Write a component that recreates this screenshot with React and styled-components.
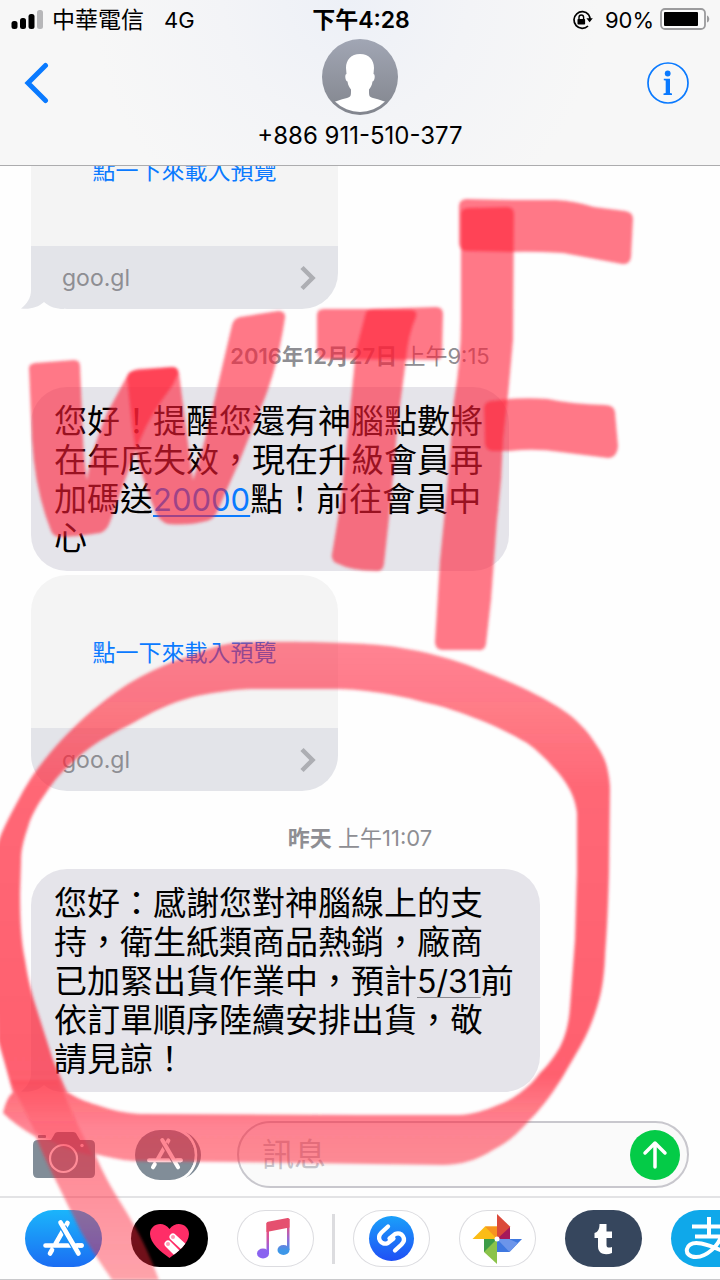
import React from "react";
import styled, { createGlobalStyle, css } from "styled-components";

const GlobalStyle = createGlobalStyle`
  *, *::before, *::after { box-sizing: border-box; }
  body {
    margin: 0;
    background: #fefefe;
    color: #000;
    font-family: Inter, "Noto Sans CJK TC", sans-serif;
    -webkit-font-smoothing: antialiased;
  }
  button { border: 0; padding: 0; background: none; font: inherit; color: inherit; cursor: pointer; }
  svg { display: block; }
`;

const BLUE = "#0a7aff";

const Screen = styled.div`
  position: relative;
  display: flex;
  flex-direction: column;
  height: 100vh;
  overflow: hidden;
`;

/* ---------- header ---------- */

const Header = styled.header`
  flex: none;
  background: radial-gradient(circle at 48% 0, #edf0f7 0, #f3f4f7 30%, #f7f7f7 62%);
  border-bottom: 1px solid #acacae;
`;

const StatusBar = styled.div`
  display: grid;
  grid-template-columns: 1fr auto 1fr;
  align-items: center;
  height: 39px;
  padding: 0 9px 0 11px;
  font-size: 22px;
  line-height: 38px;
`;

const StatusGroup = styled.div`
  display: flex;
  align-items: center;
  gap: ${(p) => p.$gap};
  justify-content: ${(p) => (p.$end ? "flex-end" : "flex-start")};
`;

const Carrier = styled.span`
  font-size: 23px;
  margin-right: 12px;
`;

const Clock = styled.time`
  font-size: 23px;
  font-weight: 600;
`;

const NavBar = styled.nav`
  display: grid;
  grid-template-columns: 1fr auto 1fr;
  padding: 0 24px;
  height: 126px;
`;

const NavButton = styled.button`
  display: flex;
  align-items: center;
  height: 88px;
  color: ${BLUE};
  justify-self: ${(p) => (p.$end ? "end" : "start")};
  margin-right: ${(p) => (p.$end ? "7px" : "0")};
`;

const Contact = styled.div`
  display: flex;
  flex-direction: column;
  align-items: center;
  gap: 6px;
  font-size: 24px;
  line-height: 30px;
`;

/* ---------- conversation ---------- */

const Thread = styled.main`
  flex: 1;
  min-height: 0;
  display: flex;
  flex-direction: column;
  justify-content: flex-end;
  align-items: flex-start;
  padding: 0 31px 20px;
  overflow: hidden;
`;

const Stamp = styled.time`
  flex: none;
  align-self: center;
  padding: 32px 0 16px;
  font-size: 22px;
  line-height: 30px;
  color: #8e8e93;
  b { font-weight: 600; }
`;

const bubbleShape = css`
  flex: none;
  position: relative;
  isolation: isolate;
  border-radius: 36px;
`;

const Tail = styled.svg`
  position: absolute;
  z-index: -1;
  left: -10px;
  bottom: 0;
`;

const Bubble = styled.p`
  ${bubbleShape}
  margin: 0;
  padding: 15px 26px 13px 23px;
  background: #e5e4ea;
  font-size: 33px;
  line-height: 39px;
  white-space: nowrap;
`;

const DataLink = styled.a`
  font-size: ${(p) => (p.$plain ? "32px" : "31px")};
  line-height: 30px;
  color: ${(p) => (p.$plain ? "inherit" : BLUE)};
  text-decoration: underline;
  text-decoration-color: ${(p) => (p.$plain ? "#8a8a90" : BLUE)};
  text-decoration-thickness: ${(p) => (p.$plain ? "1px" : "2px")};
  text-underline-offset: 4px;
`;

const Preview = styled.article`
  ${bubbleShape}
  width: 307px;
  margin-top: ${(p) => (p.$stacked ? "4px" : "0")};
`;

const LoadButton = styled.button`
  display: block;
  width: 100%;
  height: 153px;
  border-radius: 36px 36px 0 0;
  && {
    padding-bottom: 2px;
    background: #f4f4f4;
    color: ${BLUE};
    font-size: 23px;
  }
`;

const PreviewLink = styled.a`
  display: flex;
  align-items: center;
  justify-content: space-between;
  height: 63px;
  padding: 0 22px 0 31px;
  border-radius: 0 0 36px 36px;
  background: #e3e4e9;
  color: #8e8e93;
  font-size: 23px;
  text-decoration: none;
`;

/* ---------- composer ---------- */

const Composer = styled.form`
  flex: none;
  display: flex;
  align-items: center;
  gap: 36px;
  padding: 9px 31px 8px 33px;
  border-bottom: 2px solid #e3e3e5;
`;

const ToolButton = styled.button`
  width: 66px;
  flex: none;
`;

const Field = styled.div`
  flex: 1;
  min-width: 0;
  display: flex;
  align-items: center;
  height: 67px;
  padding: 0 7px 0 23px;
  border: 2px solid #c8c7cd;
  border-radius: 34px;
  background: #fafafa;
`;

const MessageInput = styled.input`
  flex: 1;
  min-width: 0;
  border: 0;
  padding: 0;
  outline: 0;
  background: none;
  font: inherit;
  font-size: 32px;
  line-height: 48px;
  &::placeholder { color: #c4c4ca; opacity: 1; }
`;

const SendButton = styled.button`
  display: grid;
  place-items: center;
  width: 50px;
  height: 50px;
  border-radius: 50%;
  && { background: #04cb47; }
`;

/* ---------- app strip ---------- */

const AppStrip = styled.footer`
  flex: none;
  display: flex;
  align-items: center;
  gap: 18px;
  padding: 12px 0 12px 25px;
  border-bottom: 1px solid #c9c9cb;
  overflow: hidden;
`;

const AppGroup = styled.div`
  flex: none;
  display: flex;
  gap: 29px;
`;

const Divider = styled.span`
  flex: none;
  width: 3px;
  height: 50px;
  background: #dcdcdf;
`;

const AppPill = styled.button`
  flex: none;
  width: 77px;
  height: 57px;
  border-radius: 29px;
  overflow: hidden;
  && {
    background: ${(p) => p.$fill || "#fff"};
    box-shadow: ${(p) => (p.$fill ? "none" : "inset 0 0 0 1px #dcdce0")};
  }
`;

const Ink = styled.svg`
  position: absolute;
  inset: 0;
  width: 100%;
  height: 100%;
  pointer-events: none;
`;

/* ---------- drawings ---------- */

const SignalIcon = () => (
  <svg width="33" height="20" viewBox="0 0 33 20" aria-label="訊號">
    <rect x="0.5" y="11" width="6" height="8" rx="2.5" />
    <rect x="9" y="8" width="6" height="11" rx="2.5" />
    <rect x="17.5" y="4" width="6" height="15" rx="2.5" />
    <rect x="26" y="0" width="6" height="19" rx="2.5" fill="#b7b7b9" />
  </svg>
);

const RotationLock = () => (
  <svg width="22" height="20" viewBox="0 0 22 20" fill="none">
    <path d="M17.6 4.6A8.3 8.3 0 1 0 17 16M17.6 4.6A8.3 8.3 0 0 1 19 9" stroke="#000" strokeWidth="1.7" />
    <path d="M15.4 8.3h6.4L18.6 12.3z" fill="#000" />
    <rect x="6.5" y="9" width="7.6" height="5.6" rx="0.8" fill="#000" />
    <path d="M8 9.5V7.3a2.300 2.300 0 0 1 4.600 0v2.200" stroke="#000" strokeWidth="1.4" />
  </svg>
);

const Battery = () => (
  <svg width="51" height="23" viewBox="0 0 51 23">
    <rect x="1" y="1" width="44" height="20" rx="4" fill="#fbfbfb" stroke="#9b9b9d" strokeWidth="1.8" />
    <rect x="4" y="4" width="34" height="14" rx="1" />
    <path d="M47 7.500c3 1 3 6 0 7z" fill="#9b9b9d" />
  </svg>
);

const BackIcon = () => (
  <svg width="25" height="42" viewBox="0 0 25 42" fill="none">
    <path d="M21.500 3.500 4 21l17.500 17.500" stroke="currentColor" strokeWidth="5" strokeLinecap="round" />
  </svg>
);

const InfoIcon = () => (
  <svg width="42" height="42" viewBox="0 0 42 42" fill="currentColor">
    <circle cx="21" cy="21" r="20" fill="none" stroke="currentColor" strokeWidth="1.7" />
    <circle cx="20.700" cy="11.500" r="2.900" />
    <path d="M16.800 16.800h6.200v14.200l2 .5v1.500h-8.500v-1.500l2.200-.5V18.500l-1.900-.3z" />
  </svg>
);

const Avatar = () => (
  <svg width="76" height="76" viewBox="0 0 76 76" role="img" aria-label="聯絡人">
    <defs>
      <linearGradient id="avatarFill" x1="0" y1="0" x2="0" y2="1">
        <stop offset="0" stopColor="#a1a6b4" />
        <stop offset="1" stopColor="#82858d" />
      </linearGradient>
      <clipPath id="avatarClip"><circle cx="38" cy="38" r="35" /></clipPath>
    </defs>
    <circle cx="38" cy="38" r="38" fill="url(#avatarFill)" />
    <path
      clipPath="url(#avatarClip)"
      fill="#fff"
      d="M38 15c9 0 14 6 14 14l-.5 6c2 0 1.500 7-1 7.500-.5 4-2 6-3.500 8 0 7 0 7 4 8.500 7 2 12 3 17 6v11H8V65c5-3 10-4 17-6 4-1.500 4-1.500 4-8.500-1.500-2-3-4-3.500-8-2.500-.5-3-7.500-1-7.500l-.5-6c0-8 5-14 14-14z"
    />
  </svg>
);

const Chevron = () => (
  <svg width="18" height="26" viewBox="0 0 18 26" fill="none">
    <path d="M4 2.500 14.500 13 4 23.500" stroke="#adaeb3" strokeWidth="4.500" />
  </svg>
);

const BubbleTail = ({ color }) => (
  <Tail width="44" height="36" viewBox="0 0 44 36">
    <path d="M10 0v17c0 8-4 14-10 18.500 9 1 17-1 23-6.500 6 5 12 7 20 7V0z" fill={color} />
  </Tail>
);

const Camera = () => (
  <svg width="62" height="46" viewBox="0 0 62 46">
    <path
      fill="#818d98"
      d="M5 8h13l3-5q1-3 4-3h15q3 0 4 3l3 5h10q5 0 5 5v28q0 5-5 5H5q-5 0-5-5V13q0-5 5-5z"
    />
    <rect x="5" y="3" width="8" height="3" rx="1" fill="#818d98" />
    <circle cx="30.500" cy="26.500" r="13.500" fill="none" stroke="#fff" strokeWidth="2.200" />
    <circle cx="49" cy="13.500" r="1.700" fill="#fff" />
  </svg>
);

const StoreGlyph = ({ gap }) => (
  <g fill="none" strokeLinecap="round" strokeWidth="4.600">
    <path d="M20.500 35.500H56.500M42.500 13 30.500 34M27 40l-2 3.500" stroke="#fff" />
    <path d="M38 17 53.500 43.500" stroke={gap} strokeWidth="7" strokeLinecap="butt" />
    <path d="M35.500 12.500 53.500 43.500M50 35.500h6.500" stroke="#fff" />
  </g>
);

const AppsIcon = () => (
  <svg width="67" height="50" viewBox="0 0 67 50">
    <path d="M50 2c8 3 16 12 16 23S58 45 50 48c7-5 12-13 12-23S57 7 50 2z" fill="#818d98" />
    <rect x="0" y="0" width="60" height="50" rx="25" fill="#818d98" />
    <path d="M48 2c8 4 13 13 13 23s-5 19-13 23" fill="none" stroke="#fefefe" strokeWidth="2.500" />
    <g transform="translate(-4 -1) scale(0.880)">
      <StoreGlyph gap="#818d98" />
    </g>
  </svg>
);

const SendArrow = () => (
  <svg width="26" height="30" viewBox="0 0 26 30" fill="none" stroke="#fff" strokeWidth="3.500" strokeLinecap="round" strokeLinejoin="round">
    <path d="M13 27V3M3 13 13 3l10 10" />
  </svg>
);

const PillArt = ({ children }) => (
  <svg width="77" height="57" viewBox="0 0 77 57">{children}</svg>
);

const HeartArt = () => (
  <PillArt>
    <defs>
      <clipPath id="heartClip">
        <path d="M38.500 48C30 42 19 33 19 24c0-10 13-14 19.500-5C45 10 58 14 58 24c0 9-11 18-19.500 24z" />
      </clipPath>
    </defs>
    <g clipPath="url(#heartClip)">
      <rect width="77" height="57" fill="#ff2d67" />
      <path d="M42 27 56 40M37 34 50 47" stroke="#fff" strokeWidth="7" strokeLinecap="round" />
      <circle cx="42" cy="27" r="2" fill="#ff9ab5" />
      <circle cx="37" cy="34" r="2" fill="#ff9ab5" />
    </g>
  </PillArt>
);

const MusicArt = () => (
  <PillArt>
    <defs>
      <linearGradient id="noteLeft" gradientUnits="userSpaceOnUse" x1="0" y1="12" x2="0" y2="48">
        <stop offset="0" stopColor="#f5506a" />
        <stop offset="0.400" stopColor="#d8529a" />
        <stop offset="0.800" stopColor="#8a63f0" />
      </linearGradient>
      <linearGradient id="noteRight" gradientUnits="userSpaceOnUse" x1="0" y1="15" x2="0" y2="45">
        <stop offset="0" stopColor="#e8527c" />
        <stop offset="0.450" stopColor="#9a68d4" />
        <stop offset="0.850" stopColor="#3d97e8" />
      </linearGradient>
    </defs>
    <rect x="29.500" y="13" width="2.500" height="31" fill="url(#noteLeft)" />
    <ellipse cx="26" cy="43.500" rx="6" ry="5" fill="url(#noteLeft)" />
    <rect x="50" y="9" width="2.500" height="31" fill="url(#noteRight)" />
    <ellipse cx="46.500" cy="40" rx="6" ry="5" fill="url(#noteRight)" />
    <path d="M29.500 13.500q0-1.500 1.500-1.800L50.500 8q2-.3 2 1.500V17.500L29.500 22z" fill="#e5506f" />
  </PillArt>
);

const ShazamArt = () => (
  <PillArt>
    <defs>
      <linearGradient id="shazamFill" x1="0" y1="0" x2="0" y2="1">
        <stop offset="0" stopColor="#1aa0fa" />
        <stop offset="1" stopColor="#1f4ff5" />
      </linearGradient>
    </defs>
    <circle cx="38.500" cy="28.500" r="22.500" fill="url(#shazamFill)" />
    <g fill="none" stroke="#fff" strokeWidth="4.300" strokeLinecap="round">
      <path d="M35 16.500 28.500 22.500c-5.500 5.500-.5 13.500 6.500 10.500l5.500-4.500" />
      <path d="M42 40.500 48.500 34.500c5.500-5.500.5-13.500-6.500-10.500l-5.500 4.500" />
    </g>
  </PillArt>
);

const PhotosArt = () => (
  <PillArt>
    <path d="M38 29V4l13 12.500V29z" fill="#db4a3b" />
    <path d="M38 29 51 17v12z" fill="#a5195a" />
    <path d="M38 29H13.500L26 16.500h12z" fill="#fbbc16" />
    <path d="M38 29 26 16.500h12z" fill="#f79420" />
    <path d="M38 29v25L25 42V29z" fill="#8bc34a" />
    <path d="M38 29 25 42V29z" fill="#3c9c47" />
    <path d="M38 29h25L50.500 42H38z" fill="#3f78e0" />
    <path d="M38 29 50.500 42 59 33 50 29z" fill="#6c95ea" />
    <circle cx="38" cy="29" r="2.500" fill="#fff" />
  </PillArt>
);

const TumblrArt = () => (
  <PillArt>
    <path
      fill="#fff"
      d="M34.500 14h7v7.500H47V28h-5.500v7c0 3 2.500 3 5.500 2v6c-6 2.500-14 1.500-14-6.500V28h-3.500v-5c3.500-1 5-4 5-9z"
    />
  </PillArt>
);

const AlipayArt = () => (
  <PillArt>
    <g fill="none" stroke="#fff" strokeWidth="4">
      <path d="M21 16.500H56M38 7v19M24 26.500h27" />
      <path d="M50 26c-2 9-14 21-25 21-7 0-10-4-9-8 3-11 20-6 46 7" />
    </g>
  </PillArt>
);

const Scribble = () => (
  <Ink viewBox="0 0 720 1280" preserveAspectRatio="none" aria-hidden="true">
    <defs>
      <filter id="softEdge" x="-5%" y="-5%" width="110%" height="110%">
        <feGaussianBlur stdDeviation="1.600" />
      </filter>
      <linearGradient id="loopInk" gradientUnits="userSpaceOnUse" x1="0" y1="640" x2="0" y2="1280">
        <stop offset="0" stopColor="#ff2238" stopOpacity="0.550" />
        <stop offset="0.090" stopColor="#ff2238" stopOpacity="0.590" />
        <stop offset="0.230" stopColor="#ff2238" stopOpacity="0.690" />
        <stop offset="0.680" stopColor="#ff2238" stopOpacity="0.720" />
        <stop offset="0.760" stopColor="#ff2238" stopOpacity="0.550" />
        <stop offset="1" stopColor="#ff2238" stopOpacity="0.420" />
      </linearGradient>
    </defs>
    <g fill="#ff2238" fillOpacity="0.600" filter="url(#softEdge)">
      <path d="M29 368Q29 364 35 363L74 360Q80 360 80 366L82 413Q83 455 87 480Q90 455 107 413L126 378Q130 370 138 369L172 367Q179 367 178 374L173 385Q150 415 140 440L125 480L110 522Q107 531 100 533Q75 537 58 537Q52 536 50 528Q35 490 32 440Z" />
      <path d="M127 378Q127 372 133 371L172 367Q178 367 179 373L185 420L193 480Q203 450 212 410L232 325Q234 318 240 317L278 311Q286 311 285 318Q277 370 262 405L240 460L217 512Q214 519 207 521Q188 526 168 524Q160 522 156 513Q137 470 132 425Z" />
      <path d="M317 315Q317 309 324 309L372 309L436 307Q443 307 443 314L442 354Q442 360 435 360L324 359Q318 359 317 352Z" />
      <path d="M366 312Q368 309 374 309L412 310Q418 311 416 317Q408 335 406 360Q402 390 398 420L391 500L384 564Q383 572 376 571Q352 571 336 563Q331 560 332 554L341 500L349 420L356 350Z" />
      <path d="M459 206Q459 200 466 199L512 200L556 200Q575 201 594 207L625 211Q633 212 633 219L631 257Q630 265 622 264Q590 258 563 253Q530 251 510 252L466 251Q459 250 459 243Z" />
      <path d="M461 214Q461 208 468 208L507 207Q514 207 514 214L513 340Q509 390 503 440Q502 480 497 520L491 600L486 644Q485 651 478 650L442 650Q435 649 435 642L440 560L447 490L454 400Q461 360 461 320Z" />
      <path d="M484 408Q484 402 491 401Q520 397 548 399Q570 404 605 405Q614 405 615 412L618 446Q617 458 608 458L560 452Q535 448 510 451L492 451Q486 450 485 444Z" />
    </g>
    <g filter="url(#softEdge)">
      <path
        fill="url(#loopInk)"
        d="M3 1113C6 1100 10 1094 14 1092L13 1093C8 1075 4 1060 -2 1040L-8 870C-4 840 5 825 20 797C30 778 40 765 50 753C65 735 80 721 93 710C110 696 125 685 140 677C155 669 170 662 187 657C205 650 218 645 233 643C260 641 310 642 345 643C380 644 400 647 423 652C440 656 458 661 473 667C493 675 508 681 523 688C540 696 556 705 567 713C578 721 587 731 593 740C600 750 605 758 607 767C609 776 610 783 610 790L609 873C608 910 607 930 605 957C604 980 601 995 597 1007C593 1020 588 1033 580 1047L562 1078C550 1097 540 1110 527 1123C516 1135 506 1144 493 1150C478 1160 460 1165 443 1165L233 1162L133 1161C120 1160 108 1157 95 1154C107 1182 115 1193 127 1213C140 1235 147 1248 159 1280L112 1280C100 1262 90 1248 80 1230L57 1183C48 1165 42 1152 36 1137Q15 1125 3 1113ZM67 1092C80 1100 90 1103 100 1106C115 1111 125 1113 140 1114L360 1115L460 1115C475 1114 485 1110 493 1107C504 1103 512 1099 520 1093C528 1087 535 1080 540 1073C549 1064 555 1056 560 1047C566 1035 569 1022 570 1007L575 940L577 873L577 813C576 805 574 798 570 790C565 781 560 774 553 767C546 759 537 750 527 743C512 734 497 727 480 720C462 713 443 706 423 702C405 697 390 694 373 692C360 690 350 689 333 689L250 689C230 690 210 693 193 697C170 703 152 712 133 723C115 732 98 741 83 753C70 764 59 774 50 787C40 801 32 813 28 827C23 842 21 850 21 862L20 893C20 920 21 940 25 960C28 980 32 995 37 1010L53 1060Z"
      />
      <path d="M10 1080L58 1080Q70 1108 78 1125L93 1156Q62 1150 35 1132Z" fill="#ff2238" fillOpacity="0.220" />
    </g>
  </Ink>
);

const LinkPreview = ({ stacked, tail }) => (
  <Preview $stacked={stacked}>
    {tail && <BubbleTail color="#e3e4e9" />}
    <LoadButton type="button">點一下來載入預覽</LoadButton>
    <PreviewLink href="#preview">
      goo.gl
      <Chevron />
    </PreviewLink>
  </Preview>
);

export default function App() {
  return (
    <Screen>
      <GlobalStyle />
      <Header>
        <StatusBar>
          <StatusGroup $gap="8px">
            <SignalIcon />
            <Carrier>中華電信</Carrier>
            <span>4G</span>
          </StatusGroup>
          <Clock>下午4:28</Clock>
          <StatusGroup $gap="6px" $end>
            <RotationLock />
            <span>&nbsp;90%</span>
            <Battery />
          </StatusGroup>
        </StatusBar>
        <NavBar>
          <NavButton type="button" aria-label="返回"><BackIcon /></NavButton>
          <Contact>
            <Avatar />
            <span>+886 911-510-377</span>
          </Contact>
          <NavButton type="button" aria-label="詳細資訊" $end><InfoIcon /></NavButton>
        </NavBar>
      </Header>

      <Thread>
        <LinkPreview tail />
        <Stamp><b>2016年12月27日</b> 上午9:15</Stamp>
        <Bubble>
          您好！提醒您還有神腦點數將<br />
          在年底失效，現在升級會員再<br />
          加碼送<DataLink href="#points">20000</DataLink>點！前往會員中<br />
          心
        </Bubble>
        <LinkPreview stacked />
        <Stamp><b>昨天</b> 上午11:07</Stamp>
        <Bubble>
          <BubbleTail color="#e5e4ea" />
          您好：感謝您對神腦線上的支<br />
          持，衛生紙類商品熱銷，廠商<br />
          已加緊出貨作業中，預計<DataLink href="#date" $plain>5/31</DataLink>前<br />
          依訂單順序陸續安排出貨，敬<br />
          請見諒！
        </Bubble>
      </Thread>

      <Composer onSubmit={(e) => e.preventDefault()}>
        <ToolButton type="button" aria-label="相機"><Camera /></ToolButton>
        <ToolButton type="button" aria-label="App"><AppsIcon /></ToolButton>
        <Field>
          <MessageInput aria-label="訊息" placeholder="訊息" />
          <SendButton type="submit" aria-label="傳送"><SendArrow /></SendButton>
        </Field>
      </Composer>

      <AppStrip>
        <AppGroup>
          <AppPill type="button" aria-label="App Store" $fill="linear-gradient(#1bb5fb, #1b6df3)">
            <PillArt><StoreGlyph gap="#1b90f7" /></PillArt>
          </AppPill>
          <AppPill type="button" aria-label="Digital Touch" $fill="#000"><HeartArt /></AppPill>
          <AppPill type="button" aria-label="音樂"><MusicArt /></AppPill>
        </AppGroup>
        <Divider />
        <AppGroup>
          <AppPill type="button" aria-label="Shazam"><ShazamArt /></AppPill>
          <AppPill type="button" aria-label="Google 相簿"><PhotosArt /></AppPill>
          <AppPill type="button" aria-label="Tumblr" $fill="#36465d"><TumblrArt /></AppPill>
          <AppPill type="button" aria-label="支付寶" $fill="#0fa8ea"><AlipayArt /></AppPill>
        </AppGroup>
      </AppStrip>

      <Scribble />
    </Screen>
  );
}
